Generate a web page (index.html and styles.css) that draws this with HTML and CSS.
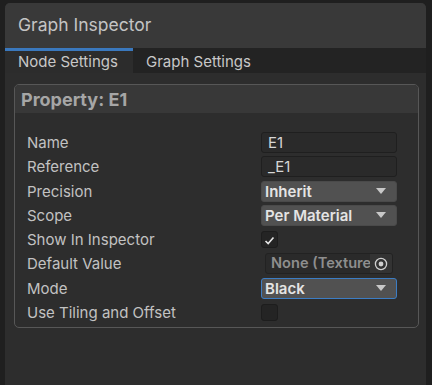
FILE: index.html
```html
<!DOCTYPE html>
<html>
<head>
<meta charset="utf-8">
<link rel="stylesheet" href="styles.css">
</head>
<body>
<div class="panel">
  <div class="title">Graph Inspector</div>
  <div class="tabs">
    <div class="tab active">Node Settings</div>
    <div class="tab">Graph Settings</div>
  </div>
  <div class="content">
    <div class="prop">
      <div class="prop-head">Property: E1</div>
      <div class="prop-body">
        <div class="row"><span class="label">Name</span><div class="field text">E1</div></div>
        <div class="row"><span class="label">Reference</span><div class="field text">_E1</div></div>
        <div class="row"><span class="label">Precision</span><div class="field drop"><span>Inherit</span><i class="arrow"></i></div></div>
        <div class="row"><span class="label">Scope</span><div class="field drop"><span>Per Material</span><i class="arrow"></i></div></div>
        <div class="row"><span class="label">Show In Inspector</span><div class="check"><svg width="17" height="17" viewBox="0 0 17 17"><path d="M4 9 L7 12 L13 5" fill="none" stroke="#e6e6e6" stroke-width="1.8"/></svg></div></div>
        <div class="row"><span class="label">Default Value</span><div class="field obj"><span class="objtext">None (Texture 2D)</span><span class="objbtn"><svg width="14" height="14" viewBox="0 0 14 14"><circle cx="7" cy="7" r="5.6" fill="none" stroke="#cfcfcf" stroke-width="1.3"/><circle cx="7" cy="7" r="2.4" fill="#cfcfcf"/></svg></span></div></div>
        <div class="row"><span class="label">Mode</span><div class="field drop focus"><span>Black</span><i class="arrow"></i></div></div>
        <div class="row"><span class="label">Use Tiling and Offset</span><div class="check"></div></div>
      </div>
    </div>
  </div>
</div>
</body>
</html>
```
FILE: styles.css
```css
html, body {
  margin: 0;
  padding: 0;
  background: #1f1f1f;
  font-family: Inter, "Noto Sans", sans-serif;
  overflow: hidden;
}
body {
  padding: 3px 6px 0 5px;
  height: 385px;
  box-sizing: border-box;
}
.panel {
  background: #2d2d2d;
  border-radius: 5px 5px 0 0;
  height: 382px;
  overflow: hidden;
}
.title {
  height: 45px;
  line-height: 44px;
  background: #393939;
  color: #c4c4c4;
  font-size: 17.5px;
  padding-left: 13px;
}
.tabs {
  display: flex;
  height: 25px;
  background: #232323;
}
.tab {
  color: #c8c8c8;
  font-size: 15px;
  padding-left: 13px;
  line-height: 22px;
  border-top: 3px solid transparent;
}
.tab.active {
  width: 115px;
  background: #2c2c2c;
  border-top-color: #3a78bd;
}
.content {
  padding: 11px 7px 0 9px;
}
.prop {
  border: 1px solid #575757;
  border-radius: 5px;
  overflow: hidden;
}
.prop-head {
  height: 28px;
  line-height: 29px;
  background: #383838;
  color: #a6a6a6;
  font-weight: 700;
  font-size: 18px;
  padding-left: 6px;
}
.prop-body {
  padding: 19px 21px 4px 12px;
}
.row {
  display: grid;
  grid-template-columns: 1fr 136px;
  align-items: center;
  height: 24.3px;
  align-content: start;
}
.row:last-child { height: 21px; }
.label {
  color: #c2c2c2;
  font-size: 15px;
  line-height: 21px;
  white-space: nowrap;
}
.field {
  height: 21px;
  box-sizing: border-box;
  border-radius: 3px;
  font-size: 15px;
  white-space: nowrap;
  overflow: hidden;
}
.text {
  background: #2a2a2a;
  border: 1px solid #1f1f1f;
  color: #d6d6d6;
  padding-left: 6px;
  line-height: 19px;
}
.drop {
  background: #515151;
  border: 1px solid #4a4a4a;
  color: #e4e4e4;
  font-weight: 600;
  padding: 0 10px 0 3px;
  display: flex;
  align-items: center;
  justify-content: space-between;
  line-height: 19px;
}
.drop.focus {
  border: 1px solid #3c7dc4;
}
.arrow {
  width: 0;
  height: 0;
  border-left: 5px solid transparent;
  border-right: 5px solid transparent;
  border-top: 6px solid #c8c8c8;
}
.check {
  width: 17px;
  height: 17px;
  box-sizing: border-box;
  background: #242424;
  border: 1px solid #1d1d1d;
  border-radius: 3px;
  display: flex;
}
.obj {
  background: #2a2a2a;
  border: 1px solid #222;
  margin: 0 4px 0 4px;
  display: flex;
  color: #8e8e8e;
  font-weight: 600;
  font-size: 14.6px;
  line-height: 19px;
}
.objtext {
  flex: 1;
  overflow: hidden;
  padding-left: 5px;
}
.objbtn {
  width: 22px;
  background: #333333;
  display: flex;
  align-items: center;
  justify-content: center;
}
```
